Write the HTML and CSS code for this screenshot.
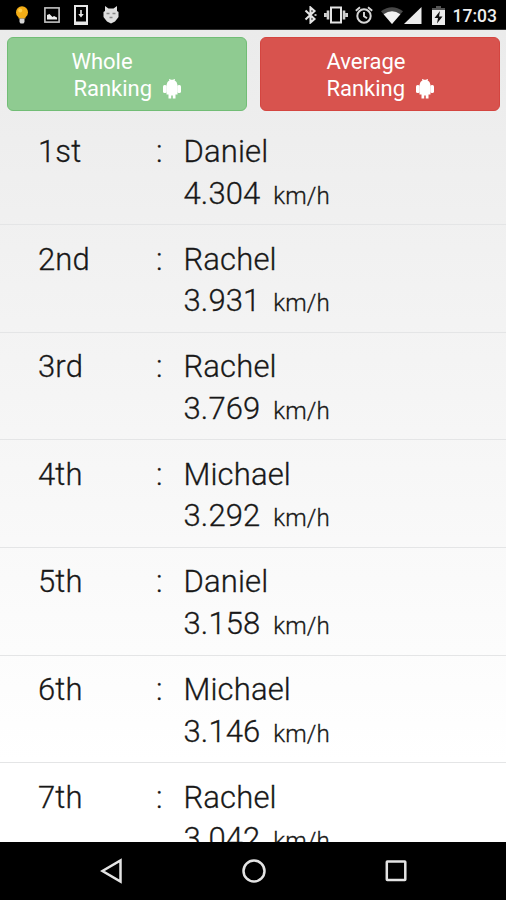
FILE: index.html
```html
<!DOCTYPE html>
<html lang="en">
  <head>
    <meta charset="UTF-8" />
    <meta name="viewport" content="width=device-width, initial-scale=1.0" />
    <title>Ranking</title>
    <link rel="stylesheet" href="styles.css">
  </head>
  <body>
    <div class="status-bar">
      <div class="notifications">
        <svg width="14" height="18" viewBox="0 0 14 18">
          <circle cx="7" cy="6.3" r="6" fill="#f3ad16" />
          <path d="M3.5 9h7v3.5h-7z" fill="#f3ad16" />
          <circle cx="5.2" cy="4.5" r="2" fill="#ffd04a" />
          <path d="M4.5 12.5h5V16L8.5 17.5h-3L4.5 16z" fill="#d5d5d5" />
        </svg>
        <svg width="16" height="16" viewBox="0 0 16 16">
          <rect x="0.9" y="0.9" width="14.2" height="14.2" fill="none" stroke="#c4c4c4" stroke-width="1.6" />
          <path d="M3 12.5V8l2.5-1 3 3 1.5-1 3 1.5v2z" fill="#eee" />
        </svg>
        <svg width="14" height="20" viewBox="0 0 14 20">
          <rect x="1" y="1" width="12" height="18" fill="none" stroke="#e6e6e6" stroke-width="2" />
          <path d="M1 16.5h12V19H1zM6.2 5h1.6v4h2L7 12.5 4.2 9h2z" fill="#e6e6e6" />
        </svg>
        <svg width="16" height="18" viewBox="0 0 16 18">
          <path d="M2 0l3.5 2.5h5L14 0v5l1.5 1v5L14 13l-2 2.500L8 17.500 4 15.500 2 13 .5 11V6L2 5z" fill="#dedede" />
          <path d="M3.5 7.5h3M9.5 7.5h3M6.5 11.5h3" stroke="#888" stroke-width="1.3" />
        </svg>
      </div>
      <div class="system">
        <svg width="13" height="18" viewBox="0 0 13 18">
          <path d="M1.5 4.5l9 8.5L6.5 16.5v-15L10.5 5l-9 8.5" fill="none" stroke="#e4e4e4" stroke-width="2.1" />
          <path d="M10.5 8.2h2v1.6h-2z" fill="#e4e4e4" />
        </svg>
        <svg class="vibrate" width="24" height="18" viewBox="0 0 24 18">
          <rect x="7" y="1.5" width="10" height="15" fill="none" stroke="#e4e4e4" stroke-width="2" />
          <path d="M4 4.5v9M1.3 7v4M20 4.5v9M22.7 7v4" stroke="#d0d0d0" stroke-width="2.6" />
        </svg>
        <svg class="alarm" width="18" height="18" viewBox="0 0 18 18">
          <circle cx="9" cy="10" r="6.7" fill="none" stroke="#d8d8d8" stroke-width="2" />
          <path d="M.8 4.8L5 1.3M17.2 4.8L13 1.3M9 6v4.3l3 2" fill="none" stroke="#d8d8d8" stroke-width="1.9" />
        </svg>
        <svg class="wifi" width="22" height="17" viewBox="0 0 22 17">
          <path d="M0 4.2Q11-3.8 22 4.2L11 17z" fill="#484848" />
          <path d="M2.6 7.2Q11 1.5 19.4 7.2L11 17z" fill="#f1f1f1" />
        </svg>
        <svg class="signal" width="18" height="17" viewBox="0 0 18 17">
          <path d="M0 17L17.5 0v17z" fill="#ececec" />
        </svg>
        <svg class="battery" width="13" height="19" viewBox="0 0 13 19">
          <path d="M4 0h5v2h4v3H0V2h4z" fill="#555" />
          <path d="M0 4h13v15H0z" fill="#ececec" />
          <path d="M8 5L2.5 12H6l-1 5.5 5.5-7H7z" fill="#111" />
        </svg>
        <span class="clock">17:03</span>
      </div>
    </div>

    <div class="content">
      <div class="tabs">
        <button class="tab tab-whole">
          <span class="tab-text">
            Whole<br />
            <span class="second">Ranking
              <svg class="droid" width="18" height="20" viewBox="0 0 18 20">
                <path d="M3.5 6Q4 2.5 6.5 1.2L6 0h1l.7.8h2.6L11 0h1l-.5 1.2Q14 2.5 14.5 6v9.5H12.5v4H9.8v-3H8.2v3H5.500v-4h-2z" />
                <rect x="0" y="6" width="3.7" height="8" rx="1.6" />
                <rect x="14.3" y="6" width="3.7" height="8" rx="1.6" />
              </svg></span>
          </span>
        </button>
        <button class="tab tab-average">
          <span class="tab-text">
            Average<br />
            <span>Ranking
              <svg class="droid" width="18" height="20" viewBox="0 0 18 20">
                <path d="M3.5 6Q4 2.5 6.5 1.2L6 0h1l.7.8h2.6L11 0h1l-.5 1.2Q14 2.5 14.5 6v9.5H12.5v4H9.8v-3H8.2v3H5.500v-4h-2z" />
                <rect x="0" y="6" width="3.7" height="8" rx="1.6" />
                <rect x="14.3" y="6" width="3.7" height="8" rx="1.6" />
              </svg></span>
          </span>
        </button>
      </div>

      <div class="list">
        <div class="row">
          <span class="rank">1st</span><span class="colon">:</span>
          <div class="result"><div>Daniel</div><div>4.304 <small>km/h</small></div></div>
        </div>
        <div class="row">
          <span class="rank">2nd</span><span class="colon">:</span>
          <div class="result"><div>Rachel</div><div>3.931 <small>km/h</small></div></div>
        </div>
        <div class="row">
          <span class="rank">3rd</span><span class="colon">:</span>
          <div class="result"><div>Rachel</div><div>3.769 <small>km/h</small></div></div>
        </div>
        <div class="row">
          <span class="rank">4th</span><span class="colon">:</span>
          <div class="result"><div>Michael</div><div>3.292 <small>km/h</small></div></div>
        </div>
        <div class="row">
          <span class="rank">5th</span><span class="colon">:</span>
          <div class="result"><div>Daniel</div><div>3.158 <small>km/h</small></div></div>
        </div>
        <div class="row">
          <span class="rank">6th</span><span class="colon">:</span>
          <div class="result"><div>Michael</div><div>3.146 <small>km/h</small></div></div>
        </div>
        <div class="row">
          <span class="rank">7th</span><span class="colon">:</span>
          <div class="result"><div>Rachel</div><div>3.042 <small>km/h</small></div></div>
        </div>
      </div>
    </div>

    <div class="nav-bar">
      <svg width="24" height="26" viewBox="0 0 24 26">
        <path d="M20.5 2.5v21L2.5 13z" />
      </svg>
      <svg width="26" height="26" viewBox="0 0 26 26">
        <circle cx="13" cy="13" r="10.5" />
      </svg>
      <svg width="24" height="26" viewBox="0 0 24 26">
        <rect x="2.8" y="3.5" width="18.5" height="18.5" rx="0.5" />
      </svg>
    </div>
  </body>
</html>
```

FILE: styles.css
```css
* {
  box-sizing: border-box;
}
body {
  margin: 0;
  height: 900px;
  display: flex;
  flex-direction: column;
  overflow: hidden;
  background-color: black;
  font-family: Roboto, sans-serif;
}
svg {
  display: block;
  flex: none;
}
.status-bar {
  height: 30px;
  flex: none;
  display: flex;
  justify-content: space-between;
  align-items: center;
  padding: 1px 9px 0 15px;
  border-bottom: 1px solid #333;
}
.notifications {
  display: flex;
  align-items: center;
  gap: 14.7px;
}
.system {
  display: flex;
  align-items: center;
}
.vibrate {
  margin-left: 7px;
}
.alarm {
  margin-left: 7px;
}
.wifi {
  margin-left: 8px;
}
.signal {
  margin-left: 1px;
}
.battery {
  margin-left: 10px;
}
.clock {
  margin-left: 8px;
  margin-top: 2px;
  color: #eee;
  font-size: 17.5px;
  font-weight: 500;
  line-height: 20px;
}
.content {
  height: 812px;
  flex: none;
  overflow: hidden;
  background: linear-gradient(#ebebeb, #ffffff 90%);
}
.tabs {
  display: flex;
  gap: 13px;
  padding: 7px 6px 0 7px;
}
.tab {
  width: 240px;
  flex: none;
  height: 74px;
  padding: 3px 0 0;
  display: flex;
  justify-content: center;
  align-items: center;
  border-radius: 6px;
  color: white;
  font-family: inherit;
  font-size: 22px;
  line-height: 26.5px;
  text-align: left;
}
.tab-whole {
  padding-right: 2px;
  background-color: #8fcb91;
  border: 1px solid #72bd76;
}
.tab-average {
  background-color: #d8534e;
  border: 1px solid #d44540;
}
.second {
  padding-left: 2px;
}
.droid {
  display: inline-block;
  vertical-align: -3px;
  margin-left: 5px;
  fill: white;
}
.list {
  padding-top: 6.6px;
}
.row {
  height: 107.6px;
  display: flex;
  padding: 13.5px 0 0 38px;
  border-bottom: 1px solid #e4e5e6;
  color: #181818;
  font-size: 31px;
  font-weight: 300;
  line-height: 41.5px;
  letter-spacing: 0.15px;
  -webkit-text-stroke: 0.3px #181818;
}
.rank {
  width: 118px;
}
.colon {
  width: 27.5px;
}
.result small {
  font-size: 24.2px;
  margin-left: 5px;
}
.nav-bar {
  flex: 1;
  display: flex;
  justify-content: space-between;
  align-items: center;
  padding: 0 98px 0 100px;
}
.nav-bar svg {
  fill: none;
  stroke: #e4e4e4;
  stroke-width: 2.5;
}
```
